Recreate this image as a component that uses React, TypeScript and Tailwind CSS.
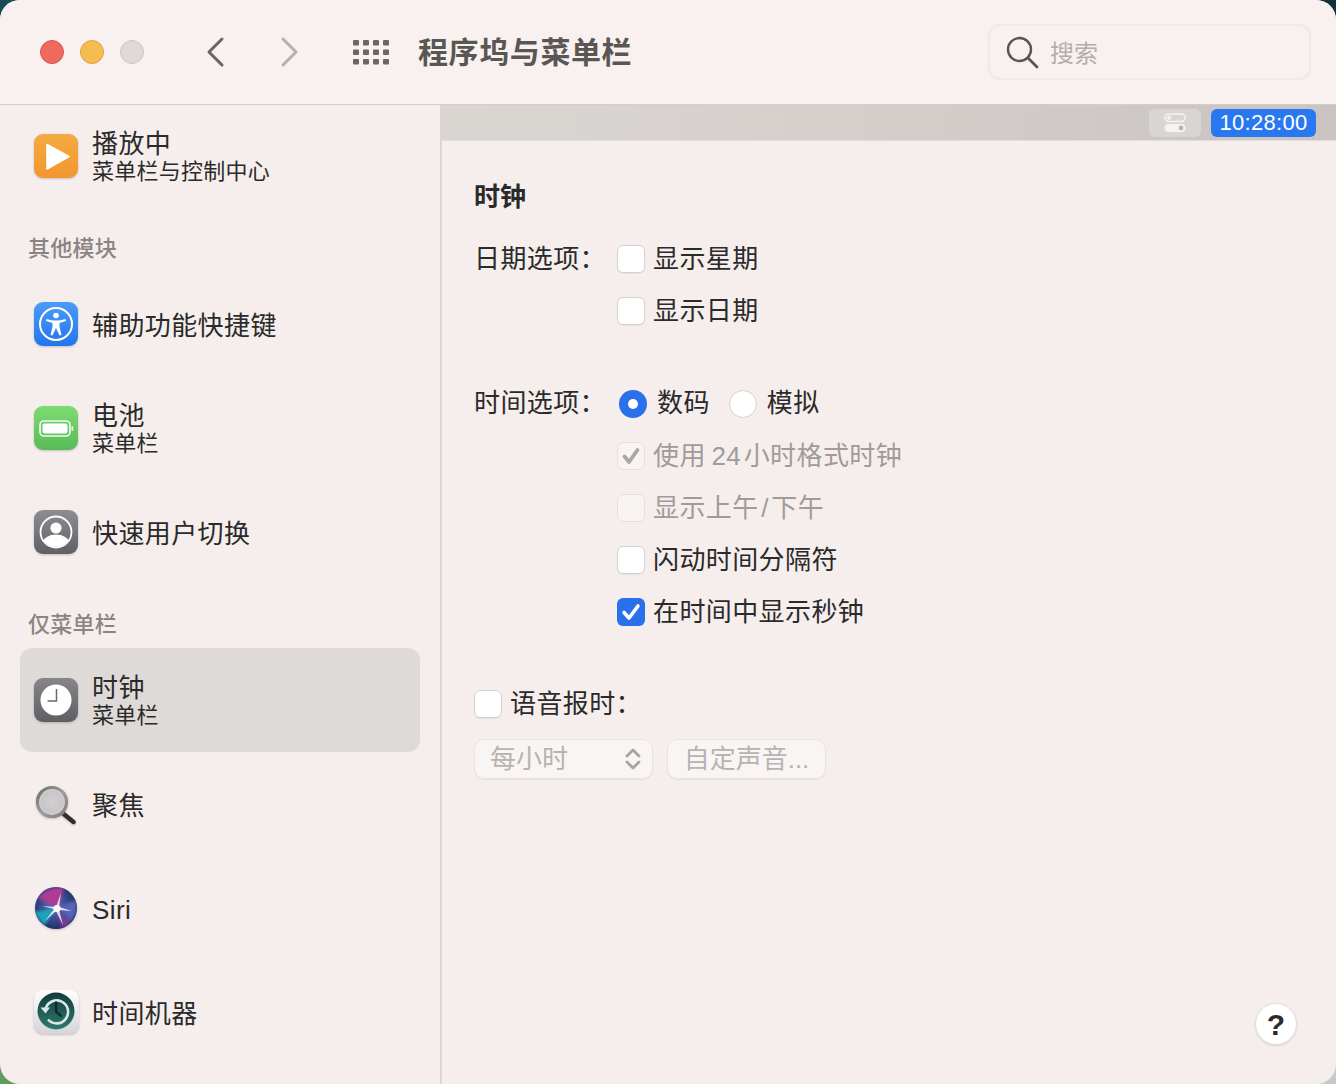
import React from 'react'

const font = "font-['Liberation_Sans','Noto_Sans_CJK_SC',sans-serif]"

function PlayIcon() {
  return (
    <svg width="44" height="44" viewBox="0 0 44 44">
      <defs>
        <linearGradient id="play" x1="0" y1="0" x2="0" y2="1">
          <stop offset="0" stopColor="#f3ab40" />
          <stop offset="1" stopColor="#f3962f" />
        </linearGradient>
      </defs>
      <rect width="44" height="44" rx="9" fill="url(#play)" />
      <path d="M13 10.5 L35 22.5 L13 35 Z" fill="#fff" stroke="#fff" strokeWidth="1.5" strokeLinejoin="round" />
    </svg>
  )
}

function AccessIcon() {
  return (
    <svg width="44" height="44" viewBox="0 0 44 44">
      <defs>
        <linearGradient id="access" x1="0" y1="0" x2="0" y2="1">
          <stop offset="0" stopColor="#4b9cf8" />
          <stop offset="1" stopColor="#2375ee" />
        </linearGradient>
      </defs>
      <rect width="44" height="44" rx="9" fill="url(#access)" />
      <circle cx="22" cy="22" r="16" fill="none" stroke="#fff" strokeWidth="2" />
      <circle cx="22" cy="13.5" r="2.8" fill="#fff" />
      <path d="M12.5 17 Q22 20 31.5 17 L32 19 L25.5 21 L25.5 25 L27.5 33 L25.5 33.5 L22 26 L18.5 33.5 L16.5 33 L18.5 25 L18.5 21 L12 19 Z" fill="#fff" />
    </svg>
  )
}

function BatteryIcon() {
  return (
    <svg width="44" height="44" viewBox="0 0 44 44">
      <defs>
        <linearGradient id="battery" x1="0" y1="0" x2="0" y2="1">
          <stop offset="0" stopColor="#7edb72" />
          <stop offset="1" stopColor="#58bb58" />
        </linearGradient>
      </defs>
      <rect width="44" height="44" rx="9" fill="url(#battery)" />
      <rect x="6" y="15" width="30" height="15" rx="4" fill="none" stroke="#fff" strokeWidth="1.6" opacity="0.9" />
      <rect x="8.5" y="17.5" width="25" height="10" rx="2" fill="#fff" />
      <rect x="37.5" y="20" width="1.8" height="5" rx="0.9" fill="#fff" opacity="0.8" />
    </svg>
  )
}

function UserIcon() {
  return (
    <svg width="44" height="44" viewBox="0 0 44 44">
      <defs>
        <linearGradient id="user" x1="0" y1="0" x2="0" y2="1">
          <stop offset="0" stopColor="#8d8d92" />
          <stop offset="1" stopColor="#5f5f64" />
        </linearGradient>
        <clipPath id="userclip">
          <circle cx="22" cy="22" r="15" />
        </clipPath>
      </defs>
      <rect width="44" height="44" rx="9" fill="url(#user)" />
      <circle cx="22" cy="22" r="15.5" fill="none" stroke="#fff" strokeWidth="1.8" />
      <circle cx="22" cy="18" r="5.6" fill="#fff" />
      <ellipse cx="22" cy="33" rx="13" ry="8.5" fill="#fff" clipPath="url(#userclip)" />
    </svg>
  )
}

function ClockIcon() {
  return (
    <svg width="44" height="44" viewBox="0 0 44 44">
      <defs>
        <linearGradient id="clock" x1="0" y1="0" x2="0" y2="1">
          <stop offset="0" stopColor="#86868a" />
          <stop offset="1" stopColor="#5e5e63" />
        </linearGradient>
      </defs>
      <rect width="44" height="44" rx="9" fill="url(#clock)" />
      <circle cx="22" cy="22" r="15.5" fill="#fff" />
      <path d="M22.5 11 V23 H13.5" fill="none" stroke="#6a6a6e" strokeWidth="1.5" />
    </svg>
  )
}

function SpotlightIcon() {
  return (
    <svg width="44" height="44" viewBox="0 0 44 44">
      <defs>
        <radialGradient id="lens" cx="0.5" cy="0.5" r="0.5">
          <stop offset="0" stopColor="#d2cfd2" />
          <stop offset="0.75" stopColor="#c8c6ca" />
          <stop offset="1" stopColor="#dedcdc" />
        </radialGradient>
        <linearGradient id="rim" x1="0" y1="0" x2="1" y2="1">
          <stop offset="0" stopColor="#6d6b68" />
          <stop offset="0.5" stopColor="#a09e9b" />
          <stop offset="1" stopColor="#807e7b" />
        </linearGradient>
      </defs>
      <path d="M28.5 31 L39.5 40" stroke="#2f2f2f" strokeWidth="4.4" strokeLinecap="round" />
      <path d="M27 29 L30 32" stroke="#777" strokeWidth="3" />
      <circle cx="18" cy="20" r="14.5" fill="url(#lens)" stroke="url(#rim)" strokeWidth="3.2" />
    </svg>
  )
}

function SiriIcon() {
  return (
    <svg width="44" height="44" viewBox="0 0 44 44">
      <defs>
        <radialGradient id="siri" cx="0.45" cy="0.45" r="0.6">
          <stop offset="0" stopColor="#5c6fb8" />
          <stop offset="0.7" stopColor="#2d3f80" />
          <stop offset="1" stopColor="#1d2a52" />
        </radialGradient>
        <filter id="soft" x="-20%" y="-20%" width="140%" height="140%">
          <feGaussianBlur stdDeviation="1.6" />
        </filter>
        <filter id="softer" x="-20%" y="-20%" width="140%" height="140%">
          <feGaussianBlur stdDeviation="0.7" />
        </filter>
        <clipPath id="siriclip">
          <circle cx="22" cy="22" r="21" />
        </clipPath>
      </defs>
      <circle cx="22" cy="22" r="21" fill="url(#siri)" />
      <g clipPath="url(#siriclip)">
        <g filter="url(#soft)">
          <path d="M4 12 Q14 0 30 2 L24 22 Z" fill="#b03a95" />
          <path d="M24 21 L42 14 Q45 26 37 35 Z" fill="#5564b8" />
          <path d="M0 26 L22 22 L10 40 Z" fill="#1fa2bb" />
          <path d="M22 24 L28 44 L38 36 Z" fill="#8a3f9c" opacity="0.8" />
        </g>
        <path d="M8 20 L22 21 L27 7 L25 21 L38 25 L25 24 L29 39 L22 25 L11 35 L20 23 Z" fill="#fff" opacity="0.8" filter="url(#softer)" />
        <circle cx="23" cy="22.5" r="3.5" fill="#fff" filter="url(#softer)" />
      </g>
    </svg>
  )
}

function TimeMachineIcon() {
  return (
    <svg width="46" height="46" viewBox="0 0 46 46">
      <defs>
        <linearGradient id="tmbg" x1="0" y1="0" x2="0" y2="1">
          <stop offset="0" stopColor="#ffffff" />
          <stop offset="1" stopColor="#d6d4d4" />
        </linearGradient>
        <linearGradient id="tm" x1="0" y1="0" x2="0" y2="1">
          <stop offset="0" stopColor="#123c3e" />
          <stop offset="1" stopColor="#2c7a6d" />
        </linearGradient>
      </defs>
      <rect x="0" y="0" width="45" height="44" rx="9" fill="url(#tmbg)" />
      <circle cx="22" cy="21" r="18.5" fill="url(#tm)" />
      <path d="M11.5 19 A11.5 11.5 0 1 1 14 29.5" fill="none" stroke="#dbe6e2" strokeWidth="2.6" />
      <path d="M6.5 17.5 H16 L11.5 23.5 Z" fill="#dbe6e2" />
      <path d="M22 11.5 V21.5 L27.5 26.5" fill="none" stroke="#0f2628" strokeWidth="2.2" />
    </svg>
  )
}

type Item = { icon: React.ReactNode; title: string; sub?: string; active?: boolean }

function SidebarItem({ icon, title, sub, active }: Item) {
  return (
    <div className={`flex h-[104px] items-center gap-[14px] rounded-xl pl-[14px] ${active ? 'bg-[#dedad8]' : ''}`}>
      <div className="h-[44px] w-[44px] shrink-0 drop-shadow-[0_1px_1px_rgba(0,0,0,0.2)]">{icon}</div>
      <div className="pt-[4px] text-[#2b2a2a]">
        <div className="text-[26px] leading-[28px] tracking-[0.4px]">{title}</div>
        {sub && <div className="text-[22px] leading-[28px] tracking-[0.25px]">{sub}</div>}
      </div>
    </div>
  )
}

function SectionLabel({ children }: { children: string }) {
  return <div className="flex h-[64px] items-end pb-[9px] pl-2 text-[22px] leading-[28px] font-medium tracking-[0.25px] text-[#8a8583]">{children}</div>
}

type BoxState = 'off' | 'on' | 'dim' | 'dimcheck'

function Checkbox({ state = 'off' }: { state?: BoxState }) {
  if (state === 'on') {
    return (
      <span className="flex h-[28px] w-[28px] items-center justify-center rounded-md bg-[#2a70ea]">
        <svg width="20" height="20" viewBox="0 0 20 20"><path d="M3 10.5 L8 16 L17 4" fill="none" stroke="#fff" strokeWidth="3.6" strokeLinecap="round" strokeLinejoin="round" /></svg>
      </span>
    )
  }
  if (state === 'dim' || state === 'dimcheck') {
    return (
      <span className="flex h-[28px] w-[28px] items-center justify-center rounded-md border border-[#e6dfdd] bg-[#f8f4f3]">
        {state === 'dimcheck' && (
          <svg width="20" height="20" viewBox="0 0 20 20"><path d="M3.5 10.5 L8 16 L16.5 4" fill="none" stroke="#aca7a5" strokeWidth="3.8" strokeLinecap="round" strokeLinejoin="round" /></svg>
        )}
      </span>
    )
  }
  return <span className="h-[28px] w-[28px] rounded-md border border-[#d6d0ce] bg-white shadow-[0_1px_1px_rgba(0,0,0,0.05)]" />
}

function CheckRow({ state, label, dim }: { state?: BoxState; label: string; dim?: boolean }) {
  return (
    <div className="flex h-[52px] items-center gap-2">
      <Checkbox state={state} />
      <span className={`text-[26px] tracking-[0.4px] ${dim ? 'text-[#a09b99]' : 'text-[#2b2a2a]'}`}>{label}</span>
    </div>
  )
}

function OptionLabel({ children }: { children: string }) {
  return <div className="flex h-[52px] w-[143px] shrink-0 items-center text-[26px] tracking-[0.4px] text-[#2b2a2a]">{children}</div>
}

export default function App() {
  return (
    <div className={`${font} h-[1084px] w-[1336px] overflow-hidden bg-[conic-gradient(#12303d_0_25%,#c8c8c8_0_50%,#5f9e5f_0_75%,#174c58_0)]`}>
      <div className="flex h-full flex-col overflow-hidden rounded-[20px] bg-[#f5eeec]">
        {/* toolbar */}
        <div className="flex h-[105px] shrink-0 items-center border-b border-[#d3cdcb] bg-[#f9f1ef]">
          <div className="ml-[40px] flex gap-4">
            <span className="h-[24px] w-[24px] rounded-full border border-[#d9534c] bg-[#ee6a5f]" />
            <span className="h-[24px] w-[24px] rounded-full border border-[#dfa23a] bg-[#f5bd4f]" />
            <span className="h-[24px] w-[24px] rounded-full border border-[#cbc5c3] bg-[#dfd9d8]" />
          </div>
          <svg className="ml-[61px]" width="20" height="32" viewBox="0 0 20 32"><path d="M17 3 L4 16 L17 29" fill="none" stroke="#6a6462" strokeWidth="3" strokeLinecap="round" strokeLinejoin="round" /></svg>
          <svg className="ml-[54px]" width="20" height="32" viewBox="0 0 20 32"><path d="M4 3 L17 16 L4 29" fill="none" stroke="#b5afad" strokeWidth="3" strokeLinecap="round" strokeLinejoin="round" /></svg>
          <svg className="ml-[54px]" width="36" height="26" viewBox="0 0 36 26" fill="#6b6563">
            {[1, 10.5, 20].map((y) =>
              [0, 10, 20, 30].map((x) => <rect key={`${x}-${y}`} x={x} y={y} width="6" height="5.5" rx="1" />)
            )}
          </svg>
          <div className="ml-[29px] text-[30px] font-semibold tracking-[0.6px] text-[#5a5654]">程序坞与菜单栏</div>
          <div className="mr-[25px] ml-auto flex h-[56px] w-[323px] items-center rounded-xl border-2 border-[#f0e8e6] pl-[16px]">
            <svg width="33" height="33" viewBox="0 0 33 33"><circle cx="13.5" cy="13.5" r="11.5" fill="none" stroke="#5a5452" strokeWidth="2.4" /><path d="M22 22 L31 31" stroke="#5a5452" strokeWidth="2.8" strokeLinecap="round" /></svg>
            <span className="mt-[3px] ml-[11px] text-[24px] text-[#b3adab]">搜索</span>
          </div>
        </div>

        <div className="flex min-h-0 flex-1">
          {/* sidebar */}
          <div className="-mt-px w-[440px] shrink-0 px-5">
            <SidebarItem icon={<PlayIcon />} title="播放中" sub="菜单栏与控制中心" />
            <SectionLabel>其他模块</SectionLabel>
            <SidebarItem icon={<AccessIcon />} title="辅助功能快捷键" />
            <SidebarItem icon={<BatteryIcon />} title="电池" sub="菜单栏" />
            <SidebarItem icon={<UserIcon />} title="快速用户切换" />
            <SectionLabel>仅菜单栏</SectionLabel>
            <SidebarItem icon={<ClockIcon />} title="时钟" sub="菜单栏" active />
            <SidebarItem icon={<SpotlightIcon />} title="聚焦" />
            <SidebarItem icon={<SiriIcon />} title="Siri" />
            <SidebarItem icon={<TimeMachineIcon />} title="时间机器" />
          </div>

          {/* content */}
          <div className="flex min-w-0 flex-1 flex-col">
            <div className="flex h-[35px] shrink-0 items-center justify-end gap-[10px] bg-gradient-to-r from-[#d9d6d2] via-[#d6d0cd] via-40% to-[#c9c4c1] pr-5">
              <div className="flex h-[28px] w-[52px] items-center justify-center rounded-md bg-[#d9d5d2]">
                <svg width="22" height="20" viewBox="0 0 22 20">
                  <rect x="1" y="1" width="20" height="7.5" rx="3.75" fill="none" stroke="#f6f3f2" strokeWidth="1.4" />
                  <circle cx="5" cy="4.75" r="2" fill="#f6f3f2" />
                  <rect x="0.5" y="11" width="21" height="8" rx="4" fill="#f6f3f2" />
                  <circle cx="17" cy="15" r="2.4" fill="#b9b5b2" />
                </svg>
              </div>
              <div className="flex h-[28px] w-[105px] items-center justify-center rounded-md bg-[#2a78ef] text-[22px] tracking-[0.3px] text-white">10:28:00</div>
            </div>

            <div className="flex flex-1 flex-col border-t border-l-2 border-t-[#e2dddb] border-l-[#dcd7d5] pt-[30px] pl-8">
              <div className="flex h-[52px] items-center text-[26px] font-semibold text-[#2b2a2a]">时钟</div>

              <div className="mt-[10px] flex">
                <OptionLabel>日期选项：</OptionLabel>
                <div>
                  <CheckRow label="显示星期" />
                  <CheckRow label="显示日期" />
                </div>
              </div>

              <div className="mt-[40px] flex">
                <OptionLabel>时间选项：</OptionLabel>
                <div>
                  <div className="flex h-[53px] items-center pl-[2px]">
                    <span className="flex h-[28px] w-[28px] items-center justify-center rounded-full bg-[#2a70ea]">
                      <span className="h-[10px] w-[10px] rounded-full bg-white" />
                    </span>
                    <span className="ml-[10px] text-[26px] tracking-[0.4px] text-[#2b2a2a]">数码</span>
                    <span className="ml-[19px] h-[28px] w-[28px] rounded-full border border-[#d6d0ce] bg-white" />
                    <span className="ml-[10px] text-[26px] tracking-[0.4px] text-[#2b2a2a]">模拟</span>
                  </div>
                  <CheckRow state="dimcheck" label={'使用\u200924\u200a小时格式时钟'} dim />
                  <CheckRow state="dim" label={'显示上午\u200a/\u200a下午'} dim />
                  <CheckRow label="闪动时间分隔符" />
                  <CheckRow state="on" label="在时间中显示秒钟" />
                </div>
              </div>

              <div className="mt-[40px] flex h-[52px] items-center gap-2">
                <Checkbox />
                <span className="text-[26px] tracking-[0.4px] text-[#2b2a2a]">语音报时：</span>
              </div>

              <div className="mt-[9px] flex gap-[14px]">
                <div className="flex h-[40px] w-[179px] items-center justify-between rounded-[10px] border border-[#e9e3e1] bg-[#f9f5f4] pr-[11px] pl-[15px] shadow-[0_1px_1px_rgba(0,0,0,0.06)]">
                  <span className="text-[26px] leading-none text-[#b8b3b1]">每小时</span>
                  <svg width="16" height="24" viewBox="0 0 16 24"><path d="M2 9 L8 3 L14 9 M2 15 L8 21 L14 15" fill="none" stroke="#a9a4a2" strokeWidth="2.8" strokeLinecap="round" strokeLinejoin="round" /></svg>
                </div>
                <div className="flex h-[40px] w-[159px] items-center justify-center rounded-[10px] border border-[#e9e3e1] bg-[#f9f5f4] text-[26px] leading-none text-[#b8b3b1] shadow-[0_1px_1px_rgba(0,0,0,0.06)]">自定声音...</div>
              </div>

              <div className="mt-auto mr-[39px] mb-[39px] flex h-[42px] w-[42px] items-center justify-center self-end rounded-full border border-[#e3dedc] bg-white text-[30px] font-bold text-[#2b2a2a] shadow-[0_1px_2px_rgba(0,0,0,0.12)]">?</div>
            </div>
          </div>
        </div>
      </div>
    </div>
  )
}
